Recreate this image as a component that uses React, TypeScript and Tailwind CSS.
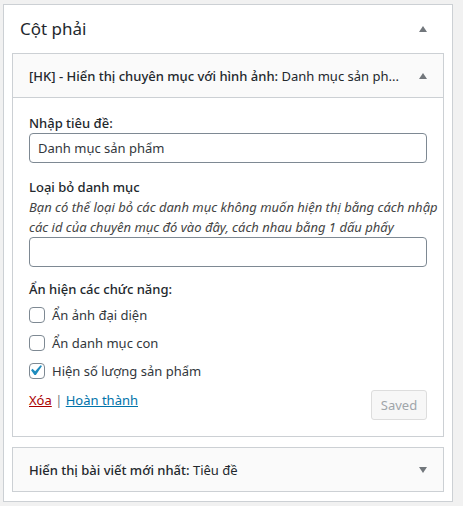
import React from "react";

function Caret({ down = false }: { down?: boolean }) {
  return (
    <svg width="8" height="6" viewBox="0 0 8 6" aria-hidden="true">
      <polygon points={down ? "0,0 8,0 4,6" : "4,0 8,6 0,6"} fill="#72777c" />
    </svg>
  );
}

function Checkbox({ checked = false }: { checked?: boolean }) {
  return (
    <span className="relative w-[16px] h-[16px] shrink-0 rounded-[4px] border border-[#7e8993] bg-white">
      {checked && (
        <svg
          className="absolute top-[-4px] left-[-5px]"
          width="21"
          height="21"
          viewBox="0 0 20 20"
          aria-hidden="true"
        >
          <path d="M14.83 4.89l1.34.94-5.81 8.38H9.02L5.78 9.67l1.34-1.25 2.57 2.4z" fill="#1e8cbe" />
        </svg>
      )}
    </span>
  );
}

function WidgetHeader({ title, sub, down = false, border = false }: { title: string; sub: string; down?: boolean; border?: boolean }) {
  return (
    <div
      className={`h-[43px] bg-[#fafafa] flex items-center justify-between pl-[16px] pr-[16px] ${border ? "border-b border-[#ccd0d4] box-content" : ""}`}
    >
      <h3 className="truncate text-[13px] leading-[20px] font-medium text-[#23282d]">
        {title}
        <span className="font-normal"> {sub}</span>
      </h3>
      <Caret down={down} />
    </div>
  );
}

const options = [
  { label: "Ẩn ảnh đại diện", checked: false },
  { label: "Ẩn danh mục con", checked: false },
  { label: "Hiện số lượng sản phẩm", checked: true },
];

export default function App() {
  return (
    <div className="w-[463px] h-[506px] bg-[#f1f1f1] pt-[4px] pl-[3px] font-['Noto_Sans',sans-serif] text-[13px] leading-[20px] text-[#444]">
      <div className="w-[450px] h-[498px] border border-[#ccd0d4] bg-white">
        {/* Sidebar name */}
        <div className="h-[48px] flex items-center justify-between pl-[16px] pr-[25px]">
          <h2 className="text-[17px] leading-[24px] text-[#23282d]">Cột phải</h2>
          <Caret />
        </div>

        <div className="px-[8px] flex flex-col gap-[10px]">
          {/* Open widget */}
          <div className="border border-[#ccd0d4] bg-white">
            <WidgetHeader
              title="[HK] - Hiển thị chuyên mục với hình ảnh:"
              sub="Danh mục sản ph..."
              border
            />
            <div className="px-[16px] pt-[15px] pb-[16px]">
              <label className="block font-medium text-[#23282d]">Nhập tiêu đề:</label>
              <div className="h-[30px] rounded-[4px] border border-[#7e8993] px-[8px] flex items-center text-[#32373c]">
                Danh mục sản phẩm
              </div>

              <label className="block mt-[14px] font-medium text-[#23282d]">Loại bỏ danh mục</label>
              <p className="italic text-[#444] whitespace-nowrap">
                Bạn có thể loại bỏ các danh mục không muốn hiện thị bằng cách nhập
                <br />
                các id của chuyên mục đó vào đây, cách nhau bằng 1 dấu phẩy
              </p>
              <div className="h-[30px] rounded-[4px] border border-[#7e8993]" />

              <p className="mt-[12px] font-medium text-[#23282d]">Ẩn hiện các chức năng:</p>
              <div className="mt-[2px] flex flex-col">
                {options.map((o) => (
                  <div key={o.label} className="h-[28px] flex items-center gap-[7px]">
                    <Checkbox checked={o.checked} />
                    <span className="text-[#32373c]">{o.label}</span>
                  </div>
                ))}
              </div>

              <div className="mt-[5px] flex items-start justify-between">
                <div className="leading-[20px]">
                  <a className="text-[#a00] underline">Xóa</a>
                  <span className="text-[#72777c]"> | </span>
                  <a className="text-[#0073aa] underline">Hoàn thành</a>
                </div>
                <button className="w-[56px] h-[30px] rounded-[3px] border border-[#dddddd] bg-[#f7f7f7] text-[#a0a5aa] text-[13px]">
                  Saved
                </button>
              </div>
            </div>
          </div>

          {/* Collapsed widget */}
          <div className="border border-[#ccd0d4]">
            <WidgetHeader title="Hiển thị bài viết mới nhất:" sub="Tiêu đề" down />
          </div>
        </div>
      </div>
    </div>
  );
}
